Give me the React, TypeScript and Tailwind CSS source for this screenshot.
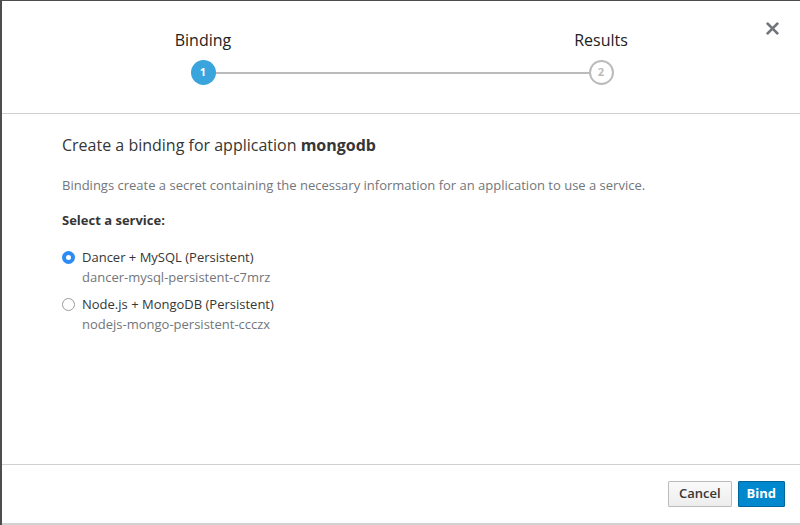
import React, { useState } from "react";

const services = [
  { id: "dancer", name: "Dancer + MySQL (Persistent)", instance: "dancer-mysql-persistent-c7mrz" },
  { id: "nodejs", name: "Node.js + MongoDB (Persistent)", instance: "nodejs-mongo-persistent-ccczx" },
];

const App = () => {
  const [selected, setSelected] = useState("dancer");

  return (
    <div
      className="w-[800px] h-[525px] flex flex-col bg-white border-t border-l-2 border-[#4d4d4d] text-[#363636]"
      style={{ fontFamily: '"Open Sans", "Noto Sans", sans-serif' }}
    >
      {/* Wizard steps */}
      <div className="relative h-[113px] shrink-0 border-b border-[#d1d1d1]">
        <div className="flex justify-between pt-[28px] pl-[170px] pr-[168px]">
          <div className="flex flex-col items-center w-[62px]">
            <div className="text-[16px] leading-[22px] text-[#222]">Binding</div>
            <div className="mt-[9px] w-[25px] h-[25px] rounded-full bg-[#39a5dc] text-white text-[11px] font-bold flex items-center justify-center z-10">
              1
            </div>
          </div>
          <div className="flex flex-col items-center w-[62px]">
            <div className="text-[16px] leading-[22px] text-[#222]">Results</div>
            <div className="mt-[9px] w-[25px] h-[25px] rounded-full border-2 border-[#bbbbbb] bg-white text-[#bbbbbb] text-[11px] font-bold flex items-center justify-center z-10">
              2
            </div>
          </div>
        </div>
        <div className="absolute left-[210px] top-[71px] w-[380px] h-[2px] bg-[#bbbbbb]" />
        <button className="absolute right-[20px] top-[20px] text-[#72767b]">
          <svg width="15" height="15" viewBox="0 0 16 16">
            <path d="M2 2 L14 14 M14 2 L2 14" stroke="currentColor" strokeWidth="3" />
          </svg>
        </button>
      </div>

      {/* Body */}
      <div className="flex-1 pl-[60px] pr-[20px] pt-[20px]">
        <h2 className="text-[16px] leading-[22px] text-[#363636]">
          Create a binding for application <span className="font-bold">mongodb</span>
        </h2>
        <p className="mt-[20px] text-[13px] leading-[18px] text-[#72767b]">
          Bindings create a secret containing the necessary information for an application to use a service.
        </p>
        <div className="mt-[17px] text-[13px] leading-[18px] font-bold text-[#363636]">Select a service:</div>
        <div className="mt-[19px] flex flex-col gap-[9px]">
          {services.map((s) => (
            <label key={s.id} className="flex items-start cursor-pointer">
              <span
                className={
                  selected === s.id
                    ? "mt-[3px] w-[13px] h-[13px] rounded-full bg-[#2b8cf4] flex items-center justify-center shrink-0"
                    : "mt-[3px] w-[13px] h-[13px] rounded-full border border-[#9b9b9b] bg-white shrink-0"
                }
              >
                {selected === s.id && <span className="w-[5px] h-[5px] rounded-full bg-white" />}
              </span>
              <input
                type="radio"
                name="service"
                className="hidden"
                checked={selected === s.id}
                onChange={() => setSelected(s.id)}
              />
              <div className="ml-[7px]">
                <div className="text-[13px] leading-[18px] text-[#363636]">{s.name}</div>
                <div className="mt-[2px] text-[13px] leading-[18px] text-[#72767b]">{s.instance}</div>
              </div>
            </label>
          ))}
        </div>
      </div>

      {/* Footer */}
      <div className="h-[61px] shrink-0 border-t border-b-2 border-[#d1d1d1] flex items-start justify-end gap-[6px] pt-[16px] pr-[15px]">
        <button className="h-[26px] px-[10px] text-[13px] font-semibold text-[#363636] border border-[#bbbbbb] rounded-[1px] bg-gradient-to-b from-[#fafafa] to-[#ededed]">
          Cancel
        </button>
        <button className="h-[26px] px-[8px] text-[13px] font-bold text-white border border-[#00659c] rounded-[1px] bg-[#0088ce]">
          Bind
        </button>
      </div>
    </div>
  );
};

export default App;
